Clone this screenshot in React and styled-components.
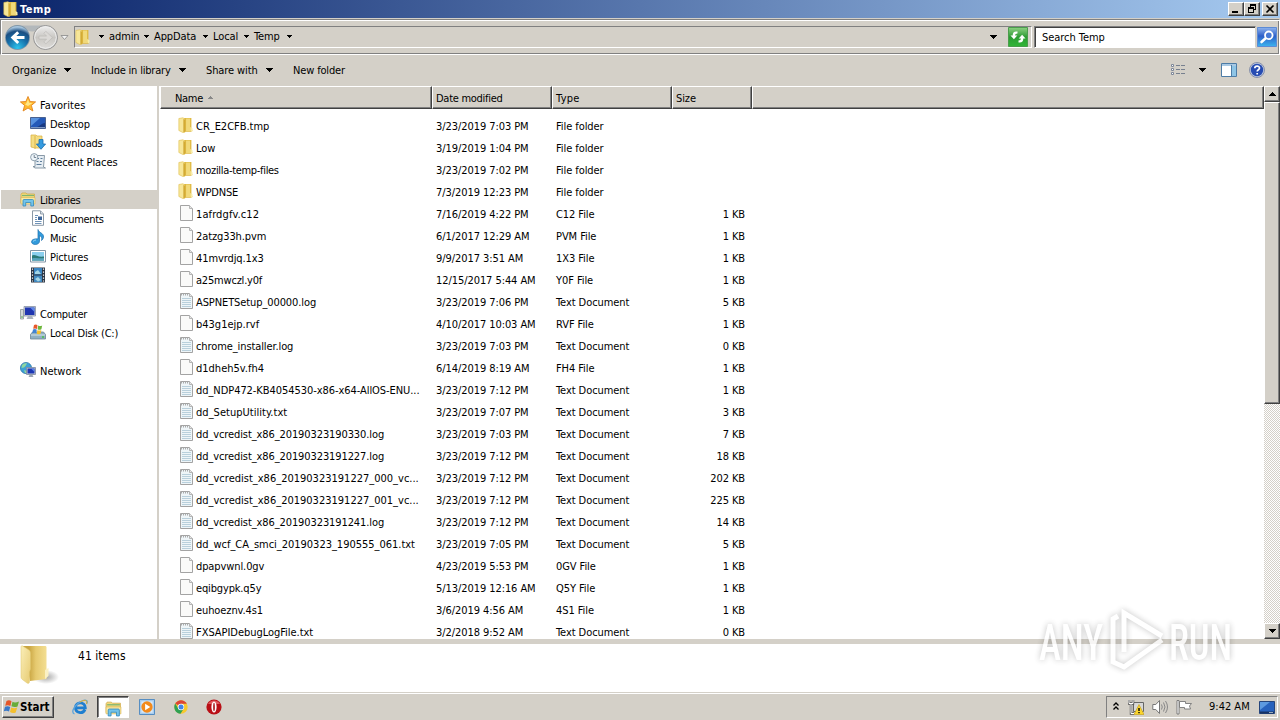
import React from 'react';
import styled, { createGlobalStyle, css } from 'styled-components';

const Face = '#d4d0c8';
const Shadow = '#808080';
const DarkShadow = '#404040';

const GlobalStyle = createGlobalStyle`
  body {
    margin: 0;
    overflow: hidden;
  }
  * {
    box-sizing: border-box;
  }
  svg {
    display: block;
    flex: none;
  }
`;

const raised = css`
  border: 1px solid;
  border-color: #fff ${DarkShadow} ${DarkShadow} #fff;
  box-shadow: inset -1px -1px 0 ${Shadow};
  background-color: ${Face};
`;

const Screen = styled.div`
  position: relative;
  width: 1280px;
  height: 720px;
  display: flex;
  flex-direction: column;
  overflow: hidden;
  background-color: ${Face};
  color: #000;
  font-family: 'DejaVu Sans Condensed', 'DejaVu Sans', sans-serif;
  font-stretch: condensed;
  font-size: 11px;
  line-height: 14px;
  letter-spacing: -0.1px;
  white-space: nowrap;
`;

const Label = styled.span`
  padding-top: 2px;
  letter-spacing: ${props => (props.$track === undefined ? -0.1 : props.$track)}px;
`;

const Spacer = styled.div`
  flex: 1;
`;

/* title bar */

const TitleBar = styled.div`
  height: 18px;
  padding: 0 2px 0 3px;
  display: flex;
  align-items: center;
  background: linear-gradient(90deg, #0a246a, #a6caf0);
`;

const Title = styled.div`
  flex: 1;
  padding: 1px 0 0 2px;
  color: #fff;
  font-weight: bold;
  letter-spacing: 0.5px;
`;

const CaptionButton = styled.div`
  ${raised}
  width: 16px;
  height: 14px;
  margin-left: ${props => props.$gap || 0}px;
  display: flex;
  align-items: center;
  justify-content: center;
`;

/* address bar */

const AddressBar = styled.div`
  height: 36px;
  margin-top: 1px;
  padding-left: 2px;
  display: flex;
  align-items: center;
  border: 1px solid;
  border-color: ${Shadow} #fff #fff ${Shadow};
  box-shadow: inset 1px 1px 0 #fff, inset -1px -1px 0 ${Shadow};
`;

const Address = styled.div`
  width: 958px;
  height: 22px;
  margin-left: 5px;
  padding: 0 3px 0 0;
  display: flex;
  align-items: center;
  border: 1px solid;
  border-color: ${Shadow} #fff #fff ${Shadow};
`;

const Crumbs = styled.div`
  flex: 1;
  padding: 0 0 1px 9px;
  display: flex;
  align-items: center;
`;

const Crumb = styled.div`
  width: ${props => props.$width}px;
  display: flex;
  align-items: center;
  gap: 5px;
`;

const RefreshButton = styled.div`
  margin-left: 11px;
`;

const SearchBox = styled.div`
  width: 222px;
  height: 22px;
  margin-left: 2px;
  padding: 2px 0 0 7px;
  display: flex;
  align-items: center;
  border: 1px solid;
  border-color: ${Shadow} ${Face} #fff ${Shadow};
  box-shadow: inset 1px 1px 0 ${DarkShadow};
  background-color: #fff;
  letter-spacing: -0.05px;
`;

const SearchButton = styled.div`
  margin-left: 1px;
`;

/* command bar */

const CommandBar = styled.div`
  height: 31px;
  padding: 0 15px 2px 12px;
  display: flex;
  align-items: center;
`;

const Command = styled.div`
  width: ${props => props.$width}px;
  padding-right: 20px;
  display: flex;
  align-items: center;
  justify-content: space-between;
`;

const ToolIcon = styled.div`
  margin-left: ${props => props.$gap || 0}px;
`;

/* panes */

const Main = styled.div`
  height: 553px;
  display: flex;
`;

const NavPane = styled.div`
  width: 160px;
  padding-top: 9px;
  border-right: 1px solid #fff;
  box-shadow: inset -2px 0 0 ${Face};
  background-color: #fff;
`;

const NavItem = styled.div`
  width: 157px;
  height: 19px;
  margin-top: ${props => (props.$gap ? 19 : 0)}px;
  margin-left: 1px;
  padding-left: ${props => (props.$child ? 29 : 19)}px;
  display: flex;
  align-items: center;
  gap: 4px;
  background-color: ${props => (props.$selected ? Face : 'transparent')};

  svg {
    margin-bottom: 1px;
  }
`;

const FilePane = styled.div`
  width: 1104px;
  background-color: #fff;
  overflow: hidden;
`;

const HeaderRow = styled.div`
  height: 23px;
  display: flex;
`;

const HeaderCell = styled.div`
  width: ${props => props.$width}px;
  padding-left: ${props => props.$pad}px;
  display: flex;
  align-items: center;
  gap: 5px;
  border: 1px solid;
  border-color: #fff ${DarkShadow} ${DarkShadow} #fff;
  box-shadow: inset -1px -1px 0 ${Shadow};
  background-color: ${Face};
`;

const FileList = styled.div`
  padding-top: 6px;
`;

const FileRow = styled.div`
  height: 22px;
  padding-left: 16px;
  display: grid;
  grid-template-columns: 20px 236px 120px 120px 73px;
  align-items: center;
`;

const IconCell = styled.div`
  padding: 0 0 2px ${props => (props.$folder ? 2 : 3)}px;
`;

const Cell = styled.div`
  padding: 2px 0 0 4px;
  letter-spacing: -0.07px;
`;

const SizeCell = styled.div`
  padding-top: 2px;
  text-align: right;
`;

const ScrollBar = styled.div`
  width: 16px;
  display: flex;
  flex-direction: column;
  background: repeating-conic-gradient(#fff 0 25%, ${Face} 0 50%) 0 0 / 2px 2px;
`;

const ScrollPart = styled.div`
  ${raised}
  height: ${props => props.$height}px;
  display: flex;
  align-items: center;
  justify-content: center;
`;

const Details = styled.div`
  height: 53px;
  padding-left: 18px;
  display: flex;
  border-top: 5px solid ${Face};
  background-color: #fff;
`;

const ItemCount = styled.div`
  margin: 5px 0 0 18px;
  font-size: 12px;
  letter-spacing: 0.05px;
`;

/* taskbar */

const TaskBar = styled.div`
  height: 28px;
  padding: 1px 2px 0;
  display: flex;
  align-items: center;
  border-top: 1px solid ${Face};
  box-shadow: inset 0 1px 0 #fff;
`;

const StartButton = styled.div`
  ${raised}
  width: 52px;
  height: 22px;
  display: flex;
  align-items: center;
  font-weight: bold;
  font-size: 11.5px;
  letter-spacing: 0;
`;

const TaskButton = styled.div`
  width: 32px;
  height: 22px;
  margin-left: ${props => props.$gap || 0}px;
  display: flex;
  align-items: center;
  justify-content: center;
  ${props =>
    props.$pressed &&
    css`
      padding: 2px 0 0 1px;
      border: 1px solid;
      border-color: ${DarkShadow} #fff #fff ${DarkShadow};
      background-color: #fff;
      box-shadow: inset 1px 1px 0 ${Shadow};
    `}
`;

const Tray = styled.div`
  width: 172px;
  height: 22px;
  padding-left: 5px;
  display: flex;
  align-items: center;
  gap: 8px;
  border: 1px solid;
  border-color: ${Shadow} #fff #fff ${Shadow};
`;

const Clock = styled.div`
  width: 42px;
  margin-left: 8px;
  letter-spacing: 0;
`;

const Watermark = styled.svg`
  position: absolute;
  left: 1030px;
  top: 600px;
  overflow: visible;
  filter: drop-shadow(0 0 3px rgba(0, 0, 0, 0.3));
  opacity: 0.8;
`;

/* icons */

const Arrow = ({ up, color = '#000' }) => (
  <svg width="7" height="4" viewBox="0 0 7 4" shapeRendering="crispEdges">
    <path d={up ? 'M3 0h1v1h1v1h1v1h1v1H0V3h1V2h1V1h1z' : 'M0 0h7v1H6v1H5v1H4v1H3V3H2V2H1V1H0z'} fill={color} />
  </svg>
);

const SmallArrow = ({ up, color = '#000' }) => (
  <svg width="5" height="3" viewBox="0 0 5 3" shapeRendering="crispEdges">
    <path d={up ? 'M2 0h1v1h1v1h1v1H0V2h1V1h1z' : 'M0 0h5v1H4v1H3v1H2V2H1V1H0z'} fill={color} />
  </svg>
);

const FolderIcon = ({ width = 15, height = 16 }) => (
  <svg width={width} height={height} viewBox="0 0 14 16" preserveAspectRatio="none">
    <path d="M5.500 1h7v9.500l1 3.500-1.500.8H5.500z" fill="#dfb941" />
    <path d="M7.500 1.500h3.800v12.500H7.500z" fill="#f1d97a" />
    <path d="M.8 1.500L4.500.8l2 1V15.200l-2 .3-3.700-2z" fill="#f7e698" stroke="#e0be50" strokeWidth=".6" />
    <path d="M5 2l1.800.8v12L5 15.200z" fill="#d3aa34" />
    <path d="M11.500 10l2 1.200v3l-2-.5z" fill="#f9eda9" />
  </svg>
);

const BigFolderIcon = () => (
  <svg width="42" height="44" viewBox="0 0 42 44">
    <defs>
      <linearGradient id="folderBack" x1="0" x2="1">
        <stop offset=".25" stopColor="#c9a542" />
        <stop offset=".55" stopColor="#e6ca70" />
        <stop offset="1" stopColor="#f3de92" />
      </linearGradient>
      <linearGradient id="folderFront" x1="0" x2="1" y2="1">
        <stop offset="0" stopColor="#faeeb8" />
        <stop offset="1" stopColor="#e7cb72" />
      </linearGradient>
      <radialGradient id="folderShade">
        <stop offset="0" stopColor="#777" stopOpacity=".65" />
        <stop offset="1" stopColor="#777" stopOpacity="0" />
      </radialGradient>
    </defs>
    <ellipse cx="28" cy="33" rx="13" ry="7" fill="url(#folderShade)" />
    <path d="M5 2h22c1 0 1.500.5 1.500 1.500V35l-16.500 2z" fill="url(#folderBack)" />
    <path d="M27 26l3.500-2v8l-3.500 3z" fill="#fbf1c4" />
    <path d="M3 3c0-1 .7-1.400 1.700-1l6.300 4c1 .8 1.500 2 1.500 3.500V25l-1 3v9.500c0 1.500-1 2.500-2.500 1.500L5 36c-1-.6-2-1.500-2-3z" fill="url(#folderFront)" stroke="#dfc66f" strokeWidth=".5" />
  </svg>
);

const TravelButtons = () => (
  <svg width="57" height="28" viewBox="0 0 57 28">
    <defs>
      <radialGradient id="backFill" cx=".5" cy=".95" r=".9">
        <stop offset="0" stopColor="#2ec5ee" />
        <stop offset=".5" stopColor="#176ea8" />
        <stop offset=".8" stopColor="#1c4f82" />
        <stop offset="1" stopColor="#a7c6df" />
      </radialGradient>
      <linearGradient id="nextFill" x2="0" y2="1">
        <stop offset="0" stopColor="#efefef" />
        <stop offset=".5" stopColor="#c9c7c3" />
        <stop offset="1" stopColor="#dfddda" />
      </linearGradient>
    </defs>
    <path d="M10 2.500h34l-10 5q-4 2-10 0z" fill="#b3b8bb" />
    <circle cx="14.500" cy="14.500" r="12.500" fill="#8097a8" />
    <circle cx="14.500" cy="14.500" r="11.600" fill="url(#backFill)" />
    <path d="M14.200 8.300l2 2-2.800 2.800H21.500v3h-8.100l2.800 2.800-2 2L7.600 14.600z" fill="#fff" />
    <circle cx="42.500" cy="14.500" r="12" fill="url(#nextFill)" stroke="#949494" />
    <circle cx="42.500" cy="14.500" r="10.800" fill="none" stroke="#eee" />
    <path d="M42.800 8.300l-2 2 2.800 2.800H36v3h7.600l-2.800 2.800 2 2 6.600-6.300z" fill="#dbd9d6" stroke="#b9b7b4" strokeWidth=".6" />
  </svg>
);

const RecentIcon = () => (
  <svg width="9" height="7" viewBox="0 0 9 7">
    <path d="M1 1.500h7L4.500 5.500z" fill="#f2f2f2" stroke="#888" strokeWidth=".8" />
  </svg>
);

const RefreshIcon = () => (
  <svg width="20" height="20" viewBox="0 0 20 20">
    <defs>
      <linearGradient id="refreshFill" x2="0" y2="1">
        <stop offset="0" stopColor="#8ed083" />
        <stop offset=".5" stopColor="#2c9c33" />
        <stop offset="1" stopColor="#32b638" />
      </linearGradient>
    </defs>
    <path d="M.5.5h19v19H.5z" fill="url(#refreshFill)" stroke="#4b9d4c" />
    <path d="M9.500 4.500C6 4 4.700 5.500 4.700 8.500H2.500l3.400 3.700 3.400-3.700H7.100c0-1.300.7-2 2.400-2zM10.500 15.500c3.500.5 4.800-1 4.800-4h2.200l-3.400-3.700-3.400 3.700h2.200c0 1.300-.7 2-2.400 2z" fill="#fff" />
  </svg>
);

const SearchIcon = () => (
  <svg width="20" height="20" viewBox="0 0 20 20">
    <defs>
      <linearGradient id="searchFill" x2="0" y2="1">
        <stop offset="0" stopColor="#8fb4ee" />
        <stop offset=".45" stopColor="#2e5fc9" />
        <stop offset="1" stopColor="#3bb4ef" />
      </linearGradient>
    </defs>
    <path d="M.5.5h19v19H.5z" fill="url(#searchFill)" stroke="#5d8bd4" />
    <path d="M9.500 10.500l-5 4.500" stroke="#fff" strokeWidth="2.600" strokeLinecap="round" />
    <circle cx="11.800" cy="8.300" r="3.800" fill="#4779d6" stroke="#fff" strokeWidth="1.800" />
  </svg>
);

const ViewIcon = () => (
  <svg width="16" height="14" viewBox="0 0 16 14">
    {[1.5, 5.5, 9.5].map(y => (
      <g key={y}>
        <path d={`M1.500 ${y}h2v2h-2z`} fill="#fff" stroke="#7d8698" />
        <path d={`M6 ${y + 1}h4M11 ${y + 1}h4`} stroke="#77808f" />
      </g>
    ))}
  </svg>
);

const PaneIcon = () => (
  <svg width="16" height="14" viewBox="0 0 16 14">
    <path d="M.5.500h15v13H.5z" fill="#fff" stroke="#4d7ca6" />
    <path d="M1 1h14v2H1z" fill="#a9c9e4" />
    <path d="M10 3h5v10h-5z" fill="#8ec5e6" />
    <path d="M10.500 2v11" stroke="#4d7ca6" />
  </svg>
);

const HelpIcon = () => (
  <svg width="16" height="16" viewBox="0 0 16 16">
    <circle cx="8" cy="8" r="7.500" fill="#bfc9df" stroke="#7682a0" strokeWidth=".8" />
    <circle cx="8" cy="8" r="6.200" fill="#274cb2" />
    <path d="M5.800 6.300c0-3 4.700-2.900 4.700-.2 0 1.700-2.300 1.600-2.300 3.500M8.200 11v1.600" stroke="#fff" strokeWidth="1.700" fill="none" />
  </svg>
);

const StarIcon = () => (
  <svg width="16" height="16" viewBox="0 0 16 16">
    <path d="M8 .5l2.100 5 5.500.4-4.200 3.500 1.500 5.600L8 12l-4.900 3 1.500-5.600L.4 5.900l5.500-.4z" fill="#ffb92e" stroke="#e28520" strokeWidth=".9" />
    <path d="M8 3l1.200 3.700L12.500 7 8 10 5 8.500 6.500 7z" fill="#ffe787" />
  </svg>
);

const DesktopIcon = () => (
  <svg width="16" height="16" viewBox="0 0 16 16">
    <path d="M.5 2.500h15v11H.5z" fill="#2459b8" stroke="#4a6290" />
    <path d="M1 3h9L1 11z" fill="#5892df" />
    <path d="M7 12c3-1 5-4 8-4v5H7z" fill="#183a83" />
    <path d="M1 12.500h14" stroke="#7d98c4" />
  </svg>
);

const DownloadsIcon = () => (
  <svg width="16" height="16" viewBox="0 0 16 16">
    <path d="M1 1h5l1 1h5v12H5l-4-1z" fill="#f4dd83" stroke="#d7ad3e" strokeWidth=".7" />
    <path d="M5 2v13" stroke="#dcb54a" />
    <path d="M9 5.500h4V10h2.600L11 15.300 6.400 10H9z" fill="#359be0" stroke="#176cae" strokeWidth=".8" />
  </svg>
);

const RecentPlacesIcon = () => (
  <svg width="16" height="16" viewBox="0 0 16 16">
    <path d="M5 2.500h9.500l-1 11.500 2 1H5l-2-1.500h2z" fill="#e6edf3" stroke="#7d8e9d" strokeWidth=".9" />
    <path d="M7 5.500h2M10.500 5.500h2M6.500 8.500h2M10 8.500h2M6.500 11.500h5" stroke="#5f7e9b" />
    <circle cx="4.200" cy="4.200" r="3.600" fill="#eef5fa" stroke="#8496a5" strokeWidth=".9" />
    <path d="M4.200 2v2.500h2" stroke="#567" strokeWidth=".8" fill="none" />
  </svg>
);

const LibrariesIcon = ({ size = 16 }) => (
  <svg width={size} height={size} viewBox="0 0 16 16">
    <path d="M1 3.500L2 2h4l1 1h7.500v9H1z" fill="#f2da7c" stroke="#cfa640" strokeWidth=".7" />
    <path d="M2 4.500h12" stroke="#7fb572" strokeWidth="1.200" />
    <path d="M1 6.500h14V13H1z" fill="#f9e9a3" stroke="#d9b453" strokeWidth=".6" />
    <path d="M3 15V9.500Q3 8.500 4 8.500h8.500q1 0 1 1V15h-2.700v-3.500H5.700V15z" fill="#73c3ea" stroke="#3389bd" strokeWidth=".8" />
  </svg>
);

const DocumentsIcon = () => (
  <svg width="16" height="16" viewBox="0 0 16 16">
    <path d="M2.500.800h8L13.500 4v11.300h-11z" fill="#fff" stroke="#7e8d9c" strokeWidth=".9" />
    <path d="M10.500 1v3h3" fill="#d9e2ea" stroke="#7e8d9c" strokeWidth=".8" />
    <path d="M5 5.500h3M5 7.500h2M5 9.500h2M5 11.500h6.500M5 13.500h6.500" stroke="#6f93b8" />
    <path d="M8 6.500h4v3.500H8z" fill="#3c659a" />
  </svg>
);

const MusicIcon = () => (
  <svg width="16" height="16" viewBox="0 0 16 16">
    <path d="M8 .5c.8 3.500 6 3.500 5.500 7.500-.2 1.700-1 2.800-2 3.500.8-2.500-.2-4.300-2-5V12c0 2.200-1.800 3.500-4.200 3.500S1.500 14.300 1.500 12.800C1.500 10.800 4.500 9.400 8 10z" fill="#329bdc" stroke="#1b6fae" strokeWidth=".7" />
    <path d="M3 12.500q1-1.500 3-1.500" stroke="#9bd5f5" fill="none" />
  </svg>
);

const PicturesIcon = () => (
  <svg width="16" height="16" viewBox="0 0 16 16">
    <path d="M.5 2.500h15v11.500H.5z" fill="#fff" stroke="#8496a6" />
    <path d="M2 4h12v8.500H2z" fill="#8bcfee" />
    <path d="M2 7.500c3-2 5 2 12 1v4H2z" fill="#2b7a78" />
    <path d="M2 10.500c4-1.500 8 .5 12-.5v2.500H2z" fill="#57a3bd" />
  </svg>
);

const VideosIcon = () => (
  <svg width="16" height="16" viewBox="0 0 16 16">
    <path d="M1 .5h14v15H1z" fill="#2a3442" />
    <path d="M4 1h8v6.500H4z" fill="#3a86c2" />
    <path d="M4 8.500h8V15H4z" fill="#4189c0" />
    <path d="M5 5l3-2 3 4H5zM5 12l3-2 3 3-3 1.500z" fill="#a3d5e6" />
    <path d="M2.500 1.500v13M13.500 1.500v13" stroke="#fff" strokeWidth="1.200" strokeDasharray="1.200 1.800" />
  </svg>
);

const ComputerIcon = () => (
  <svg width="16" height="16" viewBox="0 0 16 16">
    <path d="M.5 4.500h3V14h-3z" fill="#d3d9d9" stroke="#8b979b" strokeWidth=".8" />
    <path d="M1 12h2" stroke="#5bb04d" />
    <path d="M4 1.500h11.500v9.500H4z" fill="#ccd2db" stroke="#8791a3" strokeWidth=".8" />
    <path d="M5 2.500h9.500V10H5z" fill="#1f36b0" />
    <path d="M10 2.500h4.500V7z" fill="#5f87e6" />
    <path d="M8 11h4l1.500 3h-7z" fill="#aab2bd" />
  </svg>
);

const DiskIcon = () => (
  <svg width="16" height="16" viewBox="0 0 16 16">
    <path d="M.5 10.500l2-2.500h11l2 2.500v4.500H.5z" fill="#8fb0c2" stroke="#6d8595" strokeWidth=".8" />
    <path d="M1 11h14" stroke="#d5e3ea" />
    <path d="M12 13h2" stroke="#49c247" strokeWidth="1.300" />
    <path d="M4 1q2-1 3.500.2L7 5Q5.500 4 3.200 4.800z" fill="#e8592c" />
    <path d="M8.200 1.500q1.800 1 4 0l-.8 3.800q-2 1-3.800 0z" fill="#6eb73c" />
    <path d="M3 5.500q2-1 3.800.2l-.7 3.600Q4.500 8.500 2.200 9.200z" fill="#3f83d3" />
    <path d="M7.500 6q1.800 1 3.800 0l-.7 3.700q-2 1-3.800 0z" fill="#f3bf2b" />
  </svg>
);

const NetworkIcon = () => (
  <svg width="16" height="16" viewBox="0 0 16 16">
    <circle cx="6" cy="6" r="5.600" fill="#3ea0d6" stroke="#256fa3" strokeWidth=".7" />
    <path d="M2 3c2-2 4-2 5-1.500L5.500 4 4 5.500 1.500 6zM4 8l3 1v2H5z" fill="#8fd6a0" />
    <path d="M6.500 5.500h9v7h-9z" fill="#c3cad6" stroke="#7e889a" strokeWidth=".8" />
    <path d="M7.500 6.500h7v5h-7z" fill="#1c37b4" />
    <path d="M11 6.500h3.500V10z" fill="#5c83e3" />
    <path d="M9.500 13h3l1 2h-5z" fill="#9ba5b3" />
  </svg>
);

const FileIcon = ({ lined }) => (
  <svg width="15" height="16" viewBox="0 0 15 16">
    <path d="M1.500.5h9l3 3v12h-12z" fill={lined ? '#eef5f8' : '#fafaf9'} stroke="#a3a3a3" />
    <path d="M10.500.5v3h3" fill="#e6e6e6" stroke="#b5b5b5" />
    {lined && (
      <>
        <path d="M3 5.500h9M3 7.500h9M3 9.500h9M3 11.500h9M3 13.500h9" stroke="#b9d0dc" />
        <path d="M2 1.500h8" stroke="#aaa" strokeWidth="2" strokeDasharray="1 1" />
      </>
    )}
  </svg>
);

const WindowsLogo = () => (
  <svg width="17" height="16" viewBox="0 0 17 16">
    <path d="M3.500 2q2.600-1.500 5 .2L7.400 7Q5 5.500 2.200 6.700z" fill="#e6572a" />
    <path d="M9.500 2.800q2.500 1.300 6.500-.3l-1.500 5q-3 1.200-6.100-.2z" fill="#68ac3b" />
    <path d="M2 7.700q2.700-1.200 5.200.2L6 12.600Q3.500 11 .8 12.300z" fill="#3a79c9" />
    <path d="M8.200 8.500q2.800 1.300 6 .1l-1.500 4.900q-3 1.300-5.700-.5z" fill="#f4bf2e" />
  </svg>
);

const IeIcon = () => (
  <svg width="18" height="18" viewBox="0 0 18 18">
    <path d="M14 11.500c-2.500 5-9.500 3.500-9.500-2 0-6 9.500-6.500 9.800.3H6" fill="none" stroke="#1f7fd0" strokeWidth="2.800" />
    <path d="M3.500 16C-1 14.500 4 6 11 3c4-1.800 6.500-.5 4.500 3" fill="none" stroke="#5aa3dc" strokeWidth="1.300" />
    <path d="M9 4c5-2.800 8-2 6.500 2" fill="none" stroke="#e2b030" />
  </svg>
);

const MediaIcon = () => (
  <svg width="16" height="16" viewBox="0 0 17 17">
    <path d="M.5.500h16v16H.5z" fill="#a8cdee" stroke="#4d87bf" />
    <path d="M2.500 2.500h12v12h-12z" fill="#d8eafa" />
    <circle cx="8.500" cy="8.500" r="6" fill="#f28a1c" />
    <path d="M6.500 5l5.500 3.500L6.500 12z" fill="#fff" />
  </svg>
);

const ChromeIcon = () => (
  <svg width="14" height="14" viewBox="0 0 14 14">
    <circle cx="7" cy="7" r="6.700" fill="#f7c92e" />
    <path d="M7 7L1.200 3.600A6.700 6.700 0 0 1 12.800 3.700H7z" fill="#dc4437" />
    <path d="M1.200 3.600A6.700 6.700 0 0 0 6.500 13.700L9.800 8.600 4.200 8.600z" fill="#2fa053" />
    <circle cx="7" cy="7" r="3.200" fill="#fff" />
    <circle cx="7" cy="7" r="2.500" fill="#4385e8" />
  </svg>
);

const OperaIcon = () => (
  <svg width="16" height="16" viewBox="0 0 16 16">
    <circle cx="8" cy="8" r="7.600" fill="#b90f16" />
    <path d="M2 5a7 7 0 0 1 12 0z" fill="#e0585c" />
    <ellipse cx="8" cy="8" rx="2.600" ry="5.500" fill="#fff" />
    <ellipse cx="8" cy="8" rx="1" ry="4.300" fill="#b5383c" />
  </svg>
);

const ChevronIcon = () => (
  <svg width="8" height="11" viewBox="0 0 8 11">
    <path d="M1.500 3.500L4 1l2.500 2.500M1.500 7.500L4 5l2.500 2.500" fill="none" stroke="#000" strokeWidth="1.300" />
  </svg>
);

const TrayNetworkIcon = () => (
  <svg width="16" height="16" viewBox="0 0 16 16">
    <path d="M5.500 3.500h10v9h-10z" fill="#d8d8d8" stroke="#666" />
    <path d="M1 1v3.500h4V1M3 4.500v10h3" fill="none" stroke="#555" strokeWidth="2.400" />
    <path d="M1 1v3.500h4V1M3 4.500v10h3" fill="none" stroke="#fff" />
    <path d="M11 5.500l5 10H6z" fill="#fbd52d" stroke="#c09a16" strokeWidth=".6" />
    <path d="M11 9v3M11 13v1.300" stroke="#000" strokeWidth="1.400" />
  </svg>
);

const SpeakerIcon = () => (
  <svg width="16" height="16" viewBox="0 0 16 16">
    <path d="M.8 5.500h3L7.500 1.500v13l-3.700-4h-3z" fill="#fff" stroke="#777" />
    <path d="M9.500 5.500q1.500 2.500 0 5M11.500 3.500q3 4.500 0 9M13.500 2q4 6 0 12" fill="none" stroke="#888" />
  </svg>
);

const FlagIcon = () => (
  <svg width="17" height="16" viewBox="0 0 17 16">
    <path d="M1 1.500h2v13.500H1z" fill="#fff" stroke="#666" strokeWidth=".8" />
    <path d="M3.500 2.500h6v2h6l-2 2.500 1 3H8.500v-1.500h-5z" fill="#fff" stroke="#777" strokeWidth=".9" />
  </svg>
);

const ShowDesktopIcon = () => (
  <svg width="16" height="13" viewBox="0 0 16 13">
    <path d="M.5.500h15v12H.5z" fill="#2762bd" stroke="#25457c" />
    <path d="M1 1h10L1 9z" fill="#5d9ae0" />
    <path d="M1 11.500h14" stroke="#173264" strokeWidth="2" />
    <path d="M10 11.500h4" stroke="#9ab" />
  </svg>
);

const crumbs = [
  ['admin', 45],
  ['AppData', 59],
  ['Local', 41],
  ['Temp', 43]
];

const commands = [
  ['Organize', 79, 0],
  ['Include in library', 115, -0.2],
  ['Share with', 87, -0.1]
];

const navItems = [
  { label: 'Favorites', icon: <StarIcon />, track: 0.1 },
  { label: 'Desktop', icon: <DesktopIcon />, child: true, track: -0.15 },
  { label: 'Downloads', icon: <DownloadsIcon />, child: true, track: -0.2 },
  { label: 'Recent Places', icon: <RecentPlacesIcon />, child: true },
  { label: 'Libraries', icon: <LibrariesIcon />, gap: true, selected: true, track: -0.25 },
  { label: 'Documents', icon: <DocumentsIcon />, child: true, track: -0.3 },
  { label: 'Music', icon: <MusicIcon />, child: true, track: -0.35 },
  { label: 'Pictures', icon: <PicturesIcon />, child: true, track: -0.1 },
  { label: 'Videos', icon: <VideosIcon />, child: true, track: -0.2 },
  { label: 'Computer', icon: <ComputerIcon />, gap: true, track: -0.27 },
  { label: 'Local Disk (C:)', icon: <DiskIcon />, child: true, track: -0.2 },
  { label: 'Network', icon: <NetworkIcon />, gap: true, track: 0 }
];

// name, modified, type, size, tracking
const files = [
  ['CR_E2CFB.tmp', '3/23/2019 7:03 PM', 'File folder', '', -0.03],
  ['Low', '3/19/2019 1:04 PM', 'File folder', ''],
  ['mozilla-temp-files', '3/23/2019 7:02 PM', 'File folder', '', -0.32],
  ['WPDNSE', '7/3/2019 12:23 PM', 'File folder', '', -0.2],
  ['1afrdgfv.c12', '7/16/2019 4:22 PM', 'C12 File', '1 KB', 0.1],
  ['2atzg33h.pvm', '6/1/2017 12:29 AM', 'PVM File', '1 KB'],
  ['41mvrdjq.1x3', '9/9/2017 3:51 AM', '1X3 File', '1 KB'],
  ['a25mwczl.y0f', '12/15/2017 5:44 AM', 'Y0F File', '1 KB', -0.2],
  ['ASPNETSetup_00000.log', '3/23/2019 7:06 PM', 'Text Document', '5 KB'],
  ['b43g1ejp.rvf', '4/10/2017 10:03 AM', 'RVF File', '1 KB', 0],
  ['chrome_installer.log', '3/23/2019 7:03 PM', 'Text Document', '0 KB'],
  ['d1dheh5v.fh4', '6/14/2019 8:19 AM', 'FH4 File', '1 KB', 0],
  ['dd_NDP472-KB4054530-x86-x64-AllOS-ENU...', '3/23/2019 7:12 PM', 'Text Document', '1 KB', -0.06],
  ['dd_SetupUtility.txt', '3/23/2019 7:07 PM', 'Text Document', '3 KB', 0.03],
  ['dd_vcredist_x86_20190323190330.log', '3/23/2019 7:03 PM', 'Text Document', '7 KB'],
  ['dd_vcredist_x86_20190323191227.log', '3/23/2019 7:12 PM', 'Text Document', '18 KB'],
  ['dd_vcredist_x86_20190323191227_000_vc...', '3/23/2019 7:12 PM', 'Text Document', '202 KB', 0],
  ['dd_vcredist_x86_20190323191227_001_vc...', '3/23/2019 7:12 PM', 'Text Document', '225 KB', 0],
  ['dd_vcredist_x86_20190323191241.log', '3/23/2019 7:12 PM', 'Text Document', '14 KB'],
  ['dd_wcf_CA_smci_20190323_190555_061.txt', '3/23/2019 7:05 PM', 'Text Document', '5 KB', -0.02],
  ['dpapvwnl.0gv', '4/23/2019 5:53 PM', '0GV File', '1 KB'],
  ['eqibgypk.q5y', '5/13/2019 12:16 AM', 'Q5Y File', '1 KB', -0.15],
  ['euhoeznv.4s1', '3/6/2019 4:56 AM', '4S1 File', '1 KB'],
  ['FXSAPIDebugLogFile.txt', '3/2/2018 9:52 AM', 'Text Document', '0 KB', -0.04]
];

const App = () => (
  <Screen>
    <GlobalStyle />
    <TitleBar>
      <FolderIcon />
      <Title>Temp</Title>
      <CaptionButton>
        <svg width="12" height="10" shapeRendering="crispEdges">
          <path d="M2 7h6v2H2z" />
        </svg>
      </CaptionButton>
      <CaptionButton>
        <svg width="12" height="10" shapeRendering="crispEdges">
          <path d="M4 0h6v6H8V5h1V2H5v1H4zM2 3h6v6H2zM3 5v3h4V5z" fillRule="evenodd" />
        </svg>
      </CaptionButton>
      <CaptionButton $gap={2}>
        <svg width="12" height="10">
          <path d="M2.500 1.500l7 7M9.500 1.500l-7 7" stroke="#000" strokeWidth="1.600" />
        </svg>
      </CaptionButton>
    </TitleBar>
    <AddressBar>
      <TravelButtons />
      <RecentIcon />
      <Address>
        <FolderIcon />
        <Crumbs>
          {crumbs.map(([label, width]) => (
            <Crumb key={label} $width={width}>
              <SmallArrow />
              {label}
            </Crumb>
          ))}
          <SmallArrow />
        </Crumbs>
        <Arrow />
        <RefreshButton>
          <RefreshIcon />
        </RefreshButton>
      </Address>
      <SearchBox>Search Temp</SearchBox>
      <SearchButton>
        <SearchIcon />
      </SearchButton>
    </AddressBar>
    <CommandBar>
      {commands.map(([label, width, track]) => (
        <Command key={label} $width={width}>
          <Label $track={track}>{label}</Label>
          <Arrow />
        </Command>
      ))}
      <Label $track={-0.15}>New folder</Label>
      <Spacer />
      <ToolIcon>
        <ViewIcon />
      </ToolIcon>
      <ToolIcon $gap={13}>
        <Arrow />
      </ToolIcon>
      <ToolIcon $gap={15}>
        <PaneIcon />
      </ToolIcon>
      <ToolIcon $gap={12}>
        <HelpIcon />
      </ToolIcon>
    </CommandBar>
    <Main>
      <NavPane>
        {navItems.map(({ label, icon, child, gap, selected, track }) => (
          <NavItem key={label} $child={child} $gap={gap} $selected={selected}>
            {icon}
            <Label $track={track}>{label}</Label>
          </NavItem>
        ))}
      </NavPane>
      <FilePane>
        <HeaderRow>
          <HeaderCell $width={272} $pad={14}>
            <Label $track={-0.3}>Name</Label>
            <SmallArrow up color="#888" />
          </HeaderCell>
          <HeaderCell $width={120} $pad={3}>
            <Label $track={-0.27}>Date modified</Label>
          </HeaderCell>
          <HeaderCell $width={120} $pad={3}>
            <Label $track={0.3}>Type</Label>
          </HeaderCell>
          <HeaderCell $width={80} $pad={3}>
            <Label>Size</Label>
          </HeaderCell>
          <HeaderCell $width={512} $pad={0} />
        </HeaderRow>
        <FileList>
          {files.map(([name, modified, type, size, track]) => (
            <FileRow key={name}>
              <IconCell $folder={!size}>
                {size ? <FileIcon lined={type === 'Text Document'} /> : <FolderIcon />}
              </IconCell>
              <Label $track={track}>{name}</Label>
              <Cell>{modified}</Cell>
              <Cell>{type}</Cell>
              <SizeCell>{size}</SizeCell>
            </FileRow>
          ))}
        </FileList>
      </FilePane>
      <ScrollBar>
        <ScrollPart $height={16}>
          <Arrow up />
        </ScrollPart>
        <ScrollPart $height={302} />
        <Spacer />
        <ScrollPart $height={16}>
          <Arrow />
        </ScrollPart>
      </ScrollBar>
    </Main>
    <Details>
      <BigFolderIcon />
      <ItemCount>41 items</ItemCount>
    </Details>
    <TaskBar>
      <StartButton>
        <WindowsLogo />
        Start
      </StartButton>
      <TaskButton $gap={10}>
        <IeIcon />
      </TaskButton>
      <TaskButton $gap={1} $pressed>
        <LibrariesIcon size={17} />
      </TaskButton>
      <TaskButton $gap={2}>
        <MediaIcon />
      </TaskButton>
      <TaskButton $gap={2}>
        <ChromeIcon />
      </TaskButton>
      <TaskButton $gap={1}>
        <OperaIcon />
      </TaskButton>
      <Spacer />
      <Tray>
        <ChevronIcon />
        <TrayNetworkIcon />
        <SpeakerIcon />
        <FlagIcon />
        <Clock>9:42 AM</Clock>
        <ShowDesktopIcon />
      </Tray>
    </TaskBar>
    <Watermark width="220" height="84">
      <g fill="#fff" fontFamily="Roboto, sans-serif" fontSize="50" fontWeight="500">
        <text x="9" y="60" textLength="64" lengthAdjust="spacingAndGlyphs">
          ANY
        </text>
        <text x="139" y="60" textLength="63" lengthAdjust="spacingAndGlyphs">
          RUN
        </text>
      </g>
      <path d="M94 52V13l38 23M132 40L94 67l-11-5V19l5-3" fill="none" stroke="#fff" strokeWidth="5" />
    </Watermark>
  </Screen>
);

export default App;
